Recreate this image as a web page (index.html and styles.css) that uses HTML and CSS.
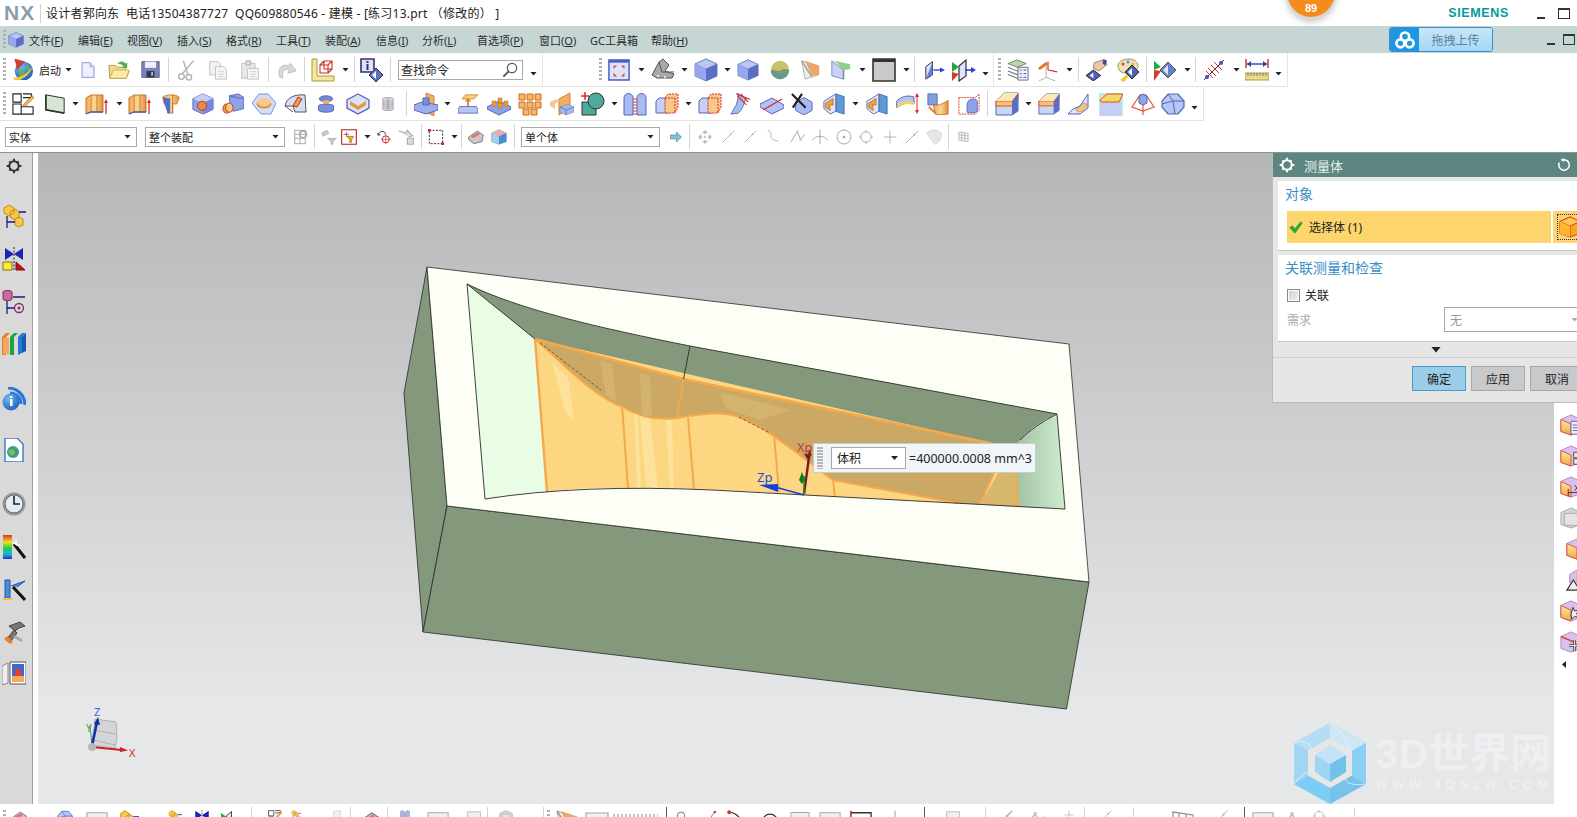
FILE: index.html
```html
<!DOCTYPE html>
<html lang="zh-CN">
<head>
<meta charset="utf-8">
<title>NX 测量体</title>
<link rel="stylesheet" href="styles.css">
</head>
<body>
<svg class="defs" aria-hidden="true">
<defs>
<linearGradient id="gb" x1="0" y1="0" x2="1" y2="1"><stop offset="0" stop-color="#c4d0f8"/><stop offset="1" stop-color="#6f84d8"/></linearGradient>
<linearGradient id="go" x1="0" y1="0" x2="1" y2="0"><stop offset="0" stop-color="#f3a75a"/><stop offset=".5" stop-color="#fbd793"/><stop offset="1" stop-color="#e08f3a"/></linearGradient>
<linearGradient id="gy" x1="0" y1="0" x2="0" y2="1"><stop offset="0" stop-color="#fde9a0"/><stop offset="1" stop-color="#f0a840"/></linearGradient>
<linearGradient id="gr" x1="0" y1="0" x2="0" y2="1"><stop offset="0" stop-color="#e83020"/><stop offset=".3" stop-color="#f0e020"/><stop offset=".55" stop-color="#20d040"/><stop offset=".8" stop-color="#20b0e0"/><stop offset="1" stop-color="#2030d0"/></linearGradient>
<linearGradient id="gw" x1="0" y1="0" x2="1" y2="0"><stop offset="0" stop-color="#9fbea0"/><stop offset="1" stop-color="#cfeccf"/></linearGradient>
<radialGradient id="gs" cx=".35" cy=".3" r=".8"><stop offset="0" stop-color="#6fb8f0"/><stop offset="1" stop-color="#1a5cb8"/></radialGradient>

<symbol id="cube" viewBox="0 0 24 24"><path d="M12 1 23 6v12l-11 5L1 18V6z" fill="#7d92e0" stroke="#5566b4" stroke-width=".8"/><path d="M12 1 23 6 12 11 1 6z" fill="#b9c7f6" stroke="#5566b4" stroke-width=".5"/><path d="M12 11 23 6v12l-11 5z" fill="#5a6fc4"/><path d="M1 6 12 11v12L1 18z" fill="#93a8ee"/></symbol>
<symbol id="cube2" viewBox="0 0 24 24"><path d="M12 1 23 6v12l-11 5L1 18V6z" fill="#8da2ea" stroke="#5566b4"/><path d="M12 1 23 6 12 11 1 6z" fill="#c3cff8"/><path d="M12 11 23 6v12l-11 5z" fill="#7389dc"/></symbol>
<symbol id="start" viewBox="0 0 24 24"><circle cx="13" cy="13" r="10" fill="url(#gs)"/><path d="M7 12c3-2 6 0 6 3s-3 6-5 3zM16 6c3 1 5 5 4 8-3-1-5-4-4-8z" fill="#6cb04a"/><path d="M1 20c6 1 16-3 22-13-2 8-11 17-20 16z" fill="#f3c430"/><path d="M3 0l11 3-8 8z" fill="#e0382c" stroke="#8c2018" stroke-width=".5"/></symbol>
<symbol id="doc" viewBox="0 0 24 24"><path d="M3 1h12l6 6v16H3z" fill="#eef0fc" stroke="#8f93dc" stroke-width="1.5"/><path d="M15 1v6h6" fill="#cfd3f6" stroke="#8f93dc"/></symbol>
<symbol id="folder" viewBox="0 0 24 24"><path d="M2 21 1 7h7l2 2h9v4l4 0-3 8z" fill="#f2d98a" stroke="#b89a3c"/><path d="M2 21l4-9h17l-3 9z" fill="#fbeaa8" stroke="#b89a3c" stroke-width=".7"/><path d="M10 5c3-3 7-3 9 0l2-1v6l-6-1 2-1c-2-2-4-3-7-3z" fill="#4cb050"/></symbol>
<symbol id="save" viewBox="0 0 24 24"><path d="M1 2h22v20H1z" fill="#7a84b8" stroke="#4f577f"/><path d="M5 2h14v8H5z" fill="#eef0f8"/><path d="M7 14h10v8H7z" fill="#30364f"/><path d="M13 15h2v5h-2z" fill="#ccd"/></symbol>
<symbol id="cut" viewBox="0 0 24 24"><g fill="none" stroke="#b5b5b5" stroke-width="1.6"><circle cx="6" cy="19" r="3"/><circle cx="14" cy="20" r="3"/><path d="M7 16 19 2M13 17 8 2"/></g></symbol>
<symbol id="copy" viewBox="0 0 24 24"><path d="M2 2h10l3 3v13H2z" fill="#f2f2f2" stroke="#bbb"/><path d="M9 8h10l3 3v12H9z" fill="#f6f6f6" stroke="#bbb"/><path d="M12 14h7M12 17h7M12 20h7" stroke="#ccc"/></symbol>
<symbol id="paste" viewBox="0 0 24 24"><path d="M2 4h16v18H2z" fill="#e8e8e8" stroke="#bbb"/><path d="M7 1h6v5H7z" fill="#ddd" stroke="#aaa"/><path d="M9 10h13v13H9z" fill="#f6f6f6" stroke="#bbb"/><path d="M12 14h7M12 17h7M12 20h7" stroke="#ccc"/></symbol>
<symbol id="redo" viewBox="0 0 24 24"><path d="M3 20C0 10 6 4 14 7l2-3 7 9-10 3 2-4C9 10 5 13 7 22z" fill="#d8d8d8" stroke="#bbb"/></symbol>
<symbol id="wcs" viewBox="0 0 24 24"><path d="M1 1h5v17h17v5H1z" fill="#f4e6a0" stroke="#b09a30"/><path d="M9 7h8v8H9zM13 3h8v8h-8zM9 7l4-4M17 7l4-4M17 15l4-4" fill="none" stroke="#c8302a" stroke-width="1.1"/></symbol>
<symbol id="info" viewBox="0 0 24 24"><path d="M1 1h13v13H1z" fill="#dfe2fb" stroke="#2f3276" stroke-width="1.6"/><path d="M6.5 3h2v2h-2zM6.5 6h2v6h-2z" fill="#2f3276"/><path d="M16 10l7 7-7 7-7-7z" fill="#5a6fc4" stroke="#333"/><path d="M16 13v8l-4-4z" fill="#fff"/></symbol>
<symbol id="mag" viewBox="0 0 24 24"><circle cx="15" cy="9" r="7" fill="#fff" stroke="#555" stroke-width="1.8"/><path d="M10 14 2 22" stroke="#555" stroke-width="3"/></symbol>
<symbol id="fit" viewBox="0 0 24 24"><path d="M1 1h22v22H1z" fill="#dde4fa" stroke="#4a5ccc" stroke-width="1.6"/><path d="M1 1h22v3H1z" fill="#4a5ccc"/><path d="M6 7h4L6 11zM18 7v4l-4-4zM6 19v-4l4 4zM18 19h-4l4-4z" fill="#e85030"/></symbol>
<symbol id="brk" viewBox="0 0 24 24"><path d="M1 17 8 4l4-3 6 6-4 6 9 3-2 4H6z" fill="#a8a8a8" stroke="#555"/><path d="M8 4l3 10h12" fill="none" stroke="#555"/><circle cx="7" cy="18" r="1" fill="#fff"/><circle cx="14" cy="19" r="1" fill="#fff"/></symbol>
<symbol id="orb" viewBox="0 0 24 24"><circle cx="12" cy="12" r="11" fill="#c8c26a"/><path d="M1 13c5-4 7 2 11 0s6-3 11-1c0 6-5 11-11 11S1 18 1 13z" fill="#5f9c8c"/><path d="M3 15c4-3 7 2 10 0s5-2 9-1" fill="none" stroke="#e08030"/></symbol>
<symbol id="clip" viewBox="0 0 24 24"><path d="M2 1 6 23l16-5V7z" fill="#ececec" stroke="#aaa"/><path d="M6 1l17 6v11l-9 1z" fill="#eaa868"/><path d="M2 1l12 19" stroke="#999" stroke-width="1.5"/></symbol>
<symbol id="clip2" viewBox="0 0 24 24"><path d="M1 1v18l14 4V12z" fill="#c9d4f4" stroke="#7080c0"/><path d="M4 1l11 11 8-1V5z" fill="#8fd08a"/><path d="M14 12v11l2 0V12z" fill="#889"/></symbol>
<symbol id="box" viewBox="0 0 24 24"><path d="M1 1h22v22H1z" fill="#c9c9c9" stroke="#333" stroke-width="1.6"/><path d="M1 1h22v3H1z" fill="#333"/></symbol>
<symbol id="bx2" viewBox="0 0 24 24"><path d="M1 3h22v20H1z" fill="#f0f0f0" stroke="#a8a8a8" stroke-width="1.2"/></symbol>
<symbol id="bx3" viewBox="0 0 24 24"><path d="M1 3h22v20H1z" fill="#fff" stroke="#333" stroke-width="1.4"/><circle cx="1" cy="3" r="2" fill="#d83028"/></symbol>
<symbol id="mv1" viewBox="0 0 24 24"><path d="M1 8l8-6v16l-8 5z" fill="#dfe5fa" stroke="#333" stroke-width="1.2"/><path d="M9 2v16l-8 5" fill="#6a7ed0"/><path d="M10 12h11" stroke="#2e40d8" stroke-width="1.6"/><path d="M18 9l6 3-6 3z" fill="#2e40d8"/></symbol>
<symbol id="mv2" viewBox="0 0 24 24"><path d="M7 8l7-6v16l-7 5z" fill="#dfe5fa" stroke="#333" stroke-width="1.2"/><path d="M0 4l7 5-7 5z" fill="#20a840"/><path d="M0 14l7 2-7 7z" fill="#d83a30"/><path d="M13 12h8" stroke="#2e40d8" stroke-width="1.6"/><path d="M19 9l5 3-5 3z" fill="#2e40d8"/></symbol>
<symbol id="stack" viewBox="0 0 24 24"><path d="M1 5l10-4 10 4-10 4z" fill="#b8d8a8" stroke="#777"/><path d="M1 9l10 4 3-1M1 13l10 4 3-1M1 17l10 4 3-1" fill="none" stroke="#777" stroke-width="1.2"/><path d="M12 9h11v14H12z" fill="#eef" stroke="#667"/><path d="M14 12h2M18 12h3M14 16h2M18 16h3M14 20h2M18 20h3" stroke="#3a4a9a"/></symbol>
<symbol id="axes" viewBox="0 0 24 24"><path d="M10 20 10 8M10 20 2 24M10 20l10 4" stroke="#aaa" fill="none"/><path d="M12 12V3M12 12l10 2" stroke="#e02820" stroke-width="1.3"/><path d="M1 10 10 3l2 3-9 6z" fill="#ef7020"/></symbol>
<symbol id="hand" viewBox="0 0 24 24"><path d="M9 4l10-3 4 5-9 7-6-3z" fill="#eec9a0" stroke="#976"/><path d="M19 0l4 2-2 5-3-2z" fill="#3a4a9a"/><path d="M8 12l8 6-8 6-8-6z" fill="#4d62b8" stroke="#222"/><path d="M8 15v6l-4-3z" fill="#fff"/></symbol>
<symbol id="pal" viewBox="0 0 24 24"><path d="M2 8C2 3 8 1 13 1s9 3 9 7-4 5-7 5-4 2-6 2c-4 0-7-3-7-7z" fill="#f0e0b8" stroke="#a89060"/><circle cx="7" cy="6" r="1.5" fill="#e04030"/><circle cx="12" cy="4" r="1.5" fill="#40a0e0"/><circle cx="17" cy="6" r="1.5" fill="#e8c020"/><path d="M4 22l7-6 1 3-4 5z" fill="#f0c83c"/><path d="M16 7l7 7-7 7-7-7z" fill="#4d62b8" stroke="#222"/><path d="M16 10v8l-4-4z" fill="#fff"/></symbol>
<symbol id="rgbd" viewBox="0 0 24 24"><path d="M1 3l7 6-7 3z" fill="#20a840"/><path d="M1 12l7 1-7 10z" fill="#d83a30"/><path d="M15 4l8 8-8 8-8-8z" fill="#6a7ed0" stroke="#555"/><path d="M15 7v10l-5-5z" fill="#dfe5fa"/></symbol>
<symbol id="ruler" viewBox="0 0 24 24"><path d="M2 22 22 2" stroke="#333"/><path d="M6 10l8 8M9 7l8 8M12 4l8 8M4 13l7 7" stroke="#e03028"/><circle cx="5" cy="19" r="2" fill="#4050d0"/><circle cx="19" cy="5" r="2" fill="#4050d0"/></symbol>
<symbol id="dim" viewBox="0 0 24 24"><path d="M1 1v9M23 1v9" stroke="#c03028" stroke-width="1.4"/><path d="M2 6h20" stroke="#2e40a8" stroke-width="1.4"/><path d="M2 6l4-3v6zM22 6l-4-3v6z" fill="#2e40a8"/><path d="M0 15h24v7H0z" fill="#eed98a" stroke="#a89848"/><path d="M3 15v3M6 15v3M9 15v3M12 15v3M15 15v3M18 15v3M21 15v3" stroke="#777"/></symbol>

<symbol id="sk" viewBox="0 0 24 24"><path d="M1 1h9v9H1zM12 1h9v4h-9M1 12h9v11H1zM10 15h13v8H10" fill="#fff" stroke="#222" stroke-width="1.2"/><path d="M13 12 22 3l2 2-9 9-3 1z" fill="#f0c040" stroke="#a03020" stroke-width=".6"/></symbol>
<symbol id="plane" viewBox="0 0 24 24"><path d="M1 1l22 4v18L1 19z" fill="#d8e4d6" stroke="#333" stroke-width="1.2"/><path d="M1 1v18l22 4" fill="none" stroke="#333" stroke-width="2"/></symbol>
<symbol id="ext" viewBox="0 0 24 24"><path d="M1 6l5-3h12v17H6l-5 2z" fill="url(#go)" stroke="#c07828"/><path d="M6 3v17M12 3v17" stroke="#d08030"/><path d="M1 22l5-2h12" stroke="#4060c0" stroke-width="1.3" fill="none"/><path d="M21 22V9" stroke="#e02820" stroke-width="1.3"/><path d="M19 11l2-4 2 4z" fill="#e02820"/></symbol>
<symbol id="rev" viewBox="0 0 24 24"><path d="M2 4c4-4 16-4 20 0l-3 8h-5v11H8l-1-11H4z" fill="url(#go)" stroke="#c07828"/><path d="M8 5h3v18H8zM2 4l6 1v18L4 12z" fill="#5570c0"/><path d="M14 1v22" stroke="#d03020" stroke-dasharray="2 1"/></symbol>
<symbol id="hole" viewBox="0 0 24 24"><use href="#cube2"/><circle cx="11" cy="14" r="5" fill="#e88a40" stroke="#c03028"/></symbol>
<symbol id="bossi" viewBox="0 0 24 24"><path d="M8 3l10-2 6 4v12l-12 3-3-3z" fill="#8ea2ea" stroke="#5566b4"/><path d="M8 3l12 3 4-1" fill="none" stroke="#5566b4"/><ellipse cx="5" cy="17" rx="4" ry="5" fill="#e8a040" stroke="#c03028"/><ellipse cx="8" cy="16" rx="4" ry="5" fill="#f6c880" stroke="#c03028"/></symbol>
<symbol id="pock" viewBox="0 0 24 24"><path d="M7 2h9l8 9-5 11H9L0 11z" fill="#d5def9" stroke="#7c8fd8"/><ellipse cx="12" cy="12" rx="7" ry="4" fill="#eda958" stroke="#c87d30"/><ellipse cx="12" cy="10" rx="7" ry="4" fill="#f6ca8c"/></symbol>
<symbol id="padi" viewBox="0 0 24 24"><path d="M2 14C3 6 11 2 22 3l1 17H12l-2-6z" fill="#d7ddf5" stroke="#555"/><path d="M10 14 15 5l4 2-5 8z" fill="#e8a040" stroke="#c03028"/><path d="M2 14l8 6" stroke="#555"/></symbol>
<symbol id="cyl" viewBox="0 0 24 24"><ellipse cx="12" cy="5" rx="9" ry="4" fill="#7387d8" stroke="#4456a8"/><path d="M8 7h8v5H8z" fill="#f0b060"/><path d="M2 14c0-2 20-2 20 0v6c0 4-20 4-20 0z" fill="#7a90e0" stroke="#4456a8"/></symbol>
<symbol id="cav" viewBox="0 0 24 24"><path d="M12 2 23 8v8l-11 6L1 16V8z" fill="#dbe2fa" stroke="#5a6fc4" stroke-width="1.4"/><path d="M4 9l8 5 8-5v4l-8 5-8-5z" fill="#ea9540"/><path d="M1 16l11 6 11-6" stroke="#5a6fc4" fill="none"/></symbol>
<symbol id="thr" viewBox="0 0 24 24"><path d="M3 3c0-3 18-3 18 0v18c0 3-18 3-18 0z" fill="#d4d8e0" stroke="#888"/><path d="M3 7h18M3 10h18M3 13h18M3 16h18M3 19h18" stroke="#a0a4b0"/><path d="M12 1v22" stroke="#d05040"/></symbol>
<symbol id="dat" viewBox="0 0 24 24"><path d="M12 1 20 4v20l-8-4z" fill="#f2b060" stroke="#d05040" stroke-width=".7"/><path d="M0 13l8-3 16 3v5l-12 4L0 18z" fill="#9db0ee" stroke="#5566b4"/><path d="M9 6h6v7H9z" fill="#7890dc" stroke="#5566b4"/></symbol>
<symbol id="emb" viewBox="0 0 24 24"><path d="M5 6 9 1h15l-5 5z" fill="#f6d268" stroke="#c08040"/><path d="M12 17V7" stroke="#e07a30" stroke-width="2"/><path d="M8 9l4-4 4 4z" fill="#e07a30"/><path d="M2 15h20l2 4v4H0v-4z" fill="#b4c4f6" stroke="#5566b4"/></symbol>
<symbol id="gr1" viewBox="0 0 24 24"><path d="M0 15 12 9l12 6v2l-12 6L0 17z" fill="#8fa2e6" stroke="#5566b4"/><g fill="#ec9b3c" stroke="#b87020" stroke-width=".5"><path d="M5 9h4v5H5zM11 6h4v5h-4zM17 9h4v5h-4zM11 11h4v5h-4z"/></g></symbol>
<symbol id="gr2" viewBox="0 0 24 24"><g fill="#f3b860" stroke="#d06820" stroke-width="1"><path d="M1 2h6v6H1zM9 2h6v6H9zM17 2h6v6h-6zM1 10h6v6H1zM9 10h6v6H9zM17 10h6v6h-6zM5 17h6v6H5zM13 17h6v6h-6z"/></g></symbol>
<symbol id="mir" viewBox="0 0 24 24"><path d="M9 7l11-6v15L9 23z" fill="#f2b060" stroke="#d08030"/><path d="M0 10l6-3 4 2-5 3zM0 10v4l5 3v-5z" fill="#f6c890"/><path d="M10 15l8-3 6 3-8 3zM10 15v5l6 3v-5zM16 18l8-3v5l-8 3z" fill="#a4b8f2" stroke="#5566b4" stroke-width=".4"/></symbol>
<symbol id="shp" viewBox="0 0 24 24"><path d="M4 0v8M0 4h8" stroke="#e02820" stroke-width="1.5"/><path d="M1 10h14v13H1z" fill="#4dab9c" stroke="#333"/><circle cx="15" cy="9" r="8" fill="#4dab9c" stroke="#333"/></symbol>
<symbol id="arch" viewBox="0 0 24 24"><path d="M1 23V6c0-6 9-6 9 0v17zM14 23V6c0-6 9-6 9 0v17z" fill="#a9bcf2" stroke="#5566b4"/><path d="M11 6v17M13 6v17" stroke="#e83a30" stroke-dasharray="2 1"/></symbol>
<symbol id="trm" viewBox="0 0 24 24"><path d="M1 9l3-3h10v15H1z" fill="#c4d0f8" stroke="#5566b4"/><path d="M10 6l3-4h10v13l-3 6H10z" fill="#f6c88a" stroke="#e02820" stroke-dasharray="2 1"/><path d="M20 6v15M10 6h10" stroke="#e02820" stroke-dasharray="2 1"/></symbol>
<symbol id="cutp" viewBox="0 0 24 24"><path d="M8 1h3l-3 12L2 23l8-1c6-5 6-12 9-16z" fill="#a9bcf2" stroke="#5566b4"/><path d="M9 1l14 6M9 3l10 10M13 1l8 9" stroke="#e02820" stroke-width="1.2"/></symbol>
<symbol id="slc" viewBox="0 0 24 24"><path d="M0 12 12 6l12 7v3l-12 6L0 15z" fill="#b2c2f4" stroke="#5566b4"/><path d="M3 18 22 7" stroke="#e02820" stroke-width="1.4"/></symbol>
<symbol id="xcb" viewBox="0 0 24 24"><path d="M14 5l9 5v9l-9 5-9-5v-9z" fill="#a7bbf2" stroke="#5566b4"/><path d="M1 1l15 15M12 1 2 16" stroke="#222" stroke-width="2.4"/></symbol>
<symbol id="shl" viewBox="0 0 24 24"><path d="M14 1l9 3v19l-9-3z" fill="#5f9ad8" stroke="#3a6eb0"/><path d="M1 9l13-8v19L8 23 1 17z" fill="#dfe6fb" stroke="#5566b4"/><path d="M3 11l8-5v7H7l1 6-5-3z" fill="#eea24a" stroke="#c07828"/></symbol>
<symbol id="ofs" viewBox="0 0 24 24"><path d="M0 10C5 4 12 3 18 5v7C12 10 6 11 1 16z" fill="#b4c6ee" stroke="#5566b4"/><path d="M1 13c5-4 11-5 17-3v3c-6-2-12-1-17 3z" fill="#f0d25c"/><path d="M21 2v18" stroke="#e02820"/><path d="M19 5l2-4 2 4zM19 18l2 4 2-4z" fill="#e02820"/></symbol>
<symbol id="swp" viewBox="0 0 24 24"><path d="M1 1h10v12H1z" fill="#7fa0e0" stroke="#5566b4"/><path d="M7 13c6 1 10-1 16-5v15c-6 1-10 1-14 0z" fill="url(#go)" stroke="#c87030"/><path d="M2 15l7 7" stroke="#e07a30" stroke-width="2"/></symbol>
<symbol id="dbx" viewBox="0 0 24 24"><path d="M1 5h18l4-4v18l-4 4H1z" fill="none" stroke="#e02820" stroke-dasharray="2 1"/><path d="M12 8c4-2 8-2 9 1v11c-2 2-8 2-11 1 0-5-1-10 2-13z" fill="#8ea4ea" stroke="#5566b4"/></symbol>
<symbol id="bln" viewBox="0 0 24 24"><path d="M1 9 9 1h14v18l-6 4H1z" fill="#c8d6f4" stroke="#5566b4"/><path d="M1 9h16l6-8v7l-6 6H1z" fill="#f3c470" stroke="#e05030"/><path d="M17 9v14l6-4V1z" fill="#5a6fc4"/><path d="M1 9 9 1h14l-6 8z" fill="#ffe7b0"/></symbol>
<symbol id="fld" viewBox="0 0 24 24"><path d="M12 14 20 2v14l-8 6H0l5-5z" fill="#dbe2fa" stroke="#5566b4"/><path d="M8 17c3 0 6-3 7-6l4 1c-1 5-6 8-9 8z" fill="#f6cc72" stroke="#e05030" stroke-width=".5"/></symbol>
<symbol id="drf" viewBox="0 0 24 24"><path d="M0 1h24v23H0z" fill="#bde9ea"/><path d="M1 8h21v16H1z" fill="#c3cff4"/><path d="M1 8 8 2h16l-4 8H2z" fill="#f6d868" stroke="#e05030"/></symbol>
<symbol id="lft" viewBox="0 0 24 24"><path d="M1 15 9 3h6l8 12-11 4z" fill="none" stroke="#e85038" stroke-width="1.2"/><path d="M8 4l4-2 4 2v7l-4 2-4-2z" fill="#8ea4ea" stroke="#5566b4"/><path d="M12 13v10" stroke="#e85038" stroke-width="1.2"/></symbol>
<symbol id="rnd" viewBox="0 0 24 24"><path d="M7 2h10l6 7v6l-6 7H7l-6-7V9z" fill="#b7c6f4" stroke="#5566b4" stroke-width="1.2"/><path d="M7 2l5 7 11 0M12 9 1 12M12 9l2 13" fill="none" stroke="#5566b4"/></symbol>

<symbol id="gi1" viewBox="0 0 24 24"><path d="M4 2h16v20H4zM4 8h16M4 14h16M12 2v20" fill="none" stroke="#bbb" stroke-width="2"/><circle cx="17" cy="8" r="5" fill="none" stroke="#aaa" stroke-width="2"/></symbol>
<symbol id="gi2" viewBox="0 0 24 24"><path d="M1 6l8-4 3 4-9 5zM10 14h13l-5 5v4h-3v-4z" fill="#c8c8c8" stroke="#aaa"/></symbol>
<symbol id="rfl" viewBox="0 0 24 24"><path d="M1 1h22v22H1z" fill="#fff" stroke="#b02020" stroke-width="1.6"/><path d="M8 4v8M4 8h8" stroke="#a02020"/><path d="M9 11h10l-3 5v4h-3v-4z" fill="#f0b030" stroke="#a06a10"/></symbol>
<symbol id="tgt" viewBox="0 0 24 24"><circle cx="15" cy="16" r="6" fill="none" stroke="#c02020" stroke-width="1.6"/><path d="M15 8v16M7 16h17" stroke="#c02020"/><path d="M2 8C4 1 12 1 15 6l-2 1M1 5l1 4 4-1" fill="none" stroke="#333" stroke-width="1.6"/></symbol>
<symbol id="gi3" viewBox="0 0 24 24"><path d="M1 3l10 3 3-4 8 8-6 2M14 14h9v9h-9z" fill="#ddd" stroke="#aaa" stroke-width="1.6"/></symbol>
<symbol id="dsh" viewBox="0 0 24 24"><path d="M2 2h20v20H2z" fill="none" stroke="#333" stroke-width="1.5" stroke-dasharray="3 2"/><path d="M0 0h4v4H0zM20 20h4v4h-4z" fill="#d02020"/></symbol>
<symbol id="vw1" viewBox="0 0 24 24"><path d="M1 12 14 3l9 6-2 10-12 3-8-6z" fill="#c8c8cc" stroke="#555"/><path d="M4 11l11-6 3 3-11 6z" fill="#e07070"/></symbol>
<symbol id="vw2" viewBox="0 0 24 24"><path d="M12 1 23 6v13l-11 4L1 19V6z" fill="#9fd0f0" stroke="#7aa"/><path d="M1 6l11 5 11-5-11-5z" fill="#f0a8a8"/><path d="M12 11v12l11-4V6z" fill="#4a8cd8"/></symbol>
<symbol id="goa" viewBox="0 0 24 24"><path d="M1 8h12V2l10 10-10 10v-6H1z" fill="#78c8d8" stroke="#557"/></symbol>
<symbol id="g1" viewBox="0 0 24 24"><path d="M12 2 22 12 12 22 2 12z" fill="none" stroke="#ccc"/><circle cx="12" cy="5" r="2.5" fill="#bbb"/><circle cx="5" cy="12" r="2.5" fill="#bbb"/><circle cx="19" cy="12" r="2.5" fill="#bbb"/><circle cx="12" cy="19" r="2.5" fill="#bbb"/><circle cx="12" cy="12" r="2" fill="#ccc"/></symbol>
<symbol id="g2" viewBox="0 0 24 24"><path d="M1 23 23 1" stroke="#aaa" stroke-width="1.5"/><circle cx="16" cy="8" r="2" fill="#bbb"/></symbol>
<symbol id="g3" viewBox="0 0 24 24"><path d="M3 1c10 0 2 11 8 15 3 2 6 2 10 3" fill="none" stroke="#aaa" stroke-width="1.5"/></symbol>
<symbol id="g4" viewBox="0 0 24 24"><path d="M1 20 11 4l5 12 6-8" fill="none" stroke="#aaa" stroke-width="1.5"/><circle cx="11" cy="4" r="2" fill="#ccc"/><circle cx="16" cy="16" r="2" fill="#ccc"/></symbol>
<symbol id="g5" viewBox="0 0 24 24"><path d="M1 17C4 9 20 9 23 17M12 1v22" fill="none" stroke="#aaa" stroke-width="1.5"/></symbol>
<symbol id="g6" viewBox="0 0 24 24"><circle cx="12" cy="12" r="10.5" fill="none" stroke="#aaa" stroke-width="1.5"/><circle cx="12" cy="12" r="2" fill="#aaa"/></symbol>
<symbol id="g7" viewBox="0 0 24 24"><circle cx="12" cy="12" r="9" fill="none" stroke="#aaa" stroke-width="1.5"/><path d="M12 0v5M12 19v5M0 12h5M19 12h5" stroke="#bbb" stroke-width="2"/></symbol>
<symbol id="g8" viewBox="0 0 24 24"><path d="M12 1v22M1 12h22" stroke="#aaa" stroke-width="1.5"/></symbol>
<symbol id="g9" viewBox="0 0 24 24"><path d="M1 6c6-6 16-6 22 0 0 8-2 14-10 17-2-4-8-10-12-17z" fill="#e6e6e6" stroke="#ccc"/></symbol>
<symbol id="g10" viewBox="0 0 24 24"><path d="M2 2l20 3v18L2 20zM2 8l20 3M2 14l20 3M8 3v18M15 4v18" fill="none" stroke="#999" stroke-width="1.4"/></symbol>
<symbol id="k1" viewBox="0 0 24 24"><circle cx="12" cy="14" r="9" fill="none" stroke="#333" stroke-width="1.6"/></symbol>
<symbol id="k2" viewBox="0 0 24 24"><path d="M2 24C6 14 10 8 14 6" fill="none" stroke="#333" stroke-width="1.5"/><circle cx="14" cy="5" r="3" fill="#d83028"/></symbol>
<symbol id="k3" viewBox="0 0 24 24"><path d="M3 3C10 3 18 8 20 20" fill="none" stroke="#333" stroke-width="1.5"/><circle cx="3" cy="3" r="2.6" fill="#d83028"/><circle cx="20" cy="15" r="2.6" fill="#d83028"/></symbol>

<symbol id="gear" viewBox="0 0 24 24"><circle cx="12" cy="12" r="7" fill="none" stroke="currentColor" stroke-width="3"/><path d="M10.5 1h3v4h-3zM10.5 19h3v4h-3zM1 10.5h4v3H1zM19 10.5h4v3h-4zM4 6l2-2 3 3-2 2zM15 7l3-3 2 2-3 3zM4 18l3-3 2 2-3 3zM15 17l2-2 3 3-2 2z" fill="currentColor"/></symbol>
<symbol id="l1" viewBox="0 0 24 24"><path d="M2 4l5-3 5 3v5l-5 3-5-3zM8 8l5-3 4 3v5l-4 3-5-3z" fill="#f8c848" stroke="#c88818"/><path d="M13 15l4-2 4 2v6l-4 2-4-2z" fill="#f8c848" stroke="#c88818"/><path d="M5 12v12M5 18h8M17 8h7" stroke="#1a1a80" stroke-width="1.3"/></symbol>
<symbol id="l2" viewBox="0 0 24 24"><path d="M3 1l9 6 9-6v12l-9-6-9 6z" fill="#1f22b0"/><path d="M12 0v24" stroke="#222" stroke-dasharray="2 1.5"/><path d="M1 15h9v8H1z" fill="#f6f030" stroke="#8a6a10"/><path d="M14 15l9 8h-9z" fill="#c81010" stroke="#801010"/></symbol>
<symbol id="l3" viewBox="0 0 24 24"><path d="M1 2c0-2 9-2 9 0v7c0 2-9 2-9 0z" fill="#c86a9a" stroke="#802858"/><path d="M5 11v13M5 18h7M11 7h12" stroke="#1a1a80" stroke-width="1.3"/><circle cx="17" cy="18" r="4.5" fill="none" stroke="#8a2868" stroke-width="1.3"/><circle cx="17" cy="18" r="1.5" fill="#8a2868"/></symbol>
<symbol id="l4" viewBox="0 0 24 24"><path d="M0 6 4 2h4L4 6v18H0z" fill="#f07820"/><path d="M1 7h6v16H1z" fill="#f0a860"/><path d="M8 6l4-4h4l-4 4v18H8z" fill="#20a040"/><path d="M16 6l4-4h4l-4 4v16l-4 2z" fill="#2878d8"/><path d="M20 6l4-4v18l-4 2z" fill="#1858b0"/></symbol>
<symbol id="l5" viewBox="0 0 24 24"><path d="M6 1c9 0 17 7 17 17M8 6c6 0 11 5 11 11" fill="none" stroke="#2878d8" stroke-width="3.2"/><circle cx="9" cy="15" r="8.5" fill="url(#gs)"/><path d="M8 9h2.5v2H8zM8 12h2.5v7H8z" fill="#fff"/></symbol>
<symbol id="l6" viewBox="0 0 24 24"><path d="M3 0h12l6 6v18H3z" fill="#fff" stroke="#3878c8" stroke-width="1.4"/><circle cx="11" cy="14" r="6" fill="#3a9a8c"/><path d="M6 13c3-3 7-2 7 1s-3 4-5 3" fill="#7abf50"/></symbol>
<symbol id="l7" viewBox="0 0 24 24"><circle cx="12" cy="12" r="11.5" fill="#999"/><circle cx="12" cy="12" r="9" fill="#e4ecf4" stroke="#666"/><path d="M12 4v8h6" fill="none" stroke="#222" stroke-width="1.6"/></symbol>
<symbol id="l8" viewBox="0 0 24 24"><path d="M1 0h9v24H1z" fill="url(#gr)"/><path d="M12 9 23 23" stroke="#111" stroke-width="3"/><path d="M8 6l5 2 1-5 1 6 5 1-5 1z" fill="#fff"/></symbol>
<symbol id="l9" viewBox="0 0 24 24"><path d="M3 3h5v18H3zM9 9l14-5-8 6" fill="#4a8cd8" stroke="#1858b0"/><path d="M11 10l12 13" stroke="#111" stroke-width="3"/><path d="M1 22h9" stroke="#f0c040" stroke-width="2"/></symbol>
<symbol id="l10" viewBox="0 0 24 24"><path d="M7 6l11-4 5 4-6 2-4 3zM4 20l8-10 3 3-6 8z" fill="#777" stroke="#444"/><path d="M2 19l3-3 6 6-3 2z" fill="#f08020"/><path d="M13 15l8 5-2 2-8-5z" fill="#aaa"/></symbol>
<symbol id="l11" viewBox="0 0 24 24"><path d="M0 5l6-3v20l-6 2z" fill="#eee" stroke="#888"/><path d="M8 1h16v22H8z" fill="#fff" stroke="#555"/><path d="M10 3h12v12H10z" fill="#3868d8"/><path d="M13 8h6v7h-6z" fill="#e84028"/><path d="M10 15h12v6H10z" fill="#f8a858"/></symbol>

<symbol id="pc" viewBox="0 0 24 24"><path d="M12 1 23 6v13l-11 4L1 19V6z" fill="#d9c0ee" stroke="#a884c8"/><path d="M1 6l11 5v12L1 19z" fill="url(#gy)" stroke="#e04838"/></symbol>
<symbol id="p1" viewBox="0 0 24 24"><use href="#pc"/><path d="M12 8h10v14H12z" fill="#eef" stroke="#5566b4"/><path d="M14 12h6M14 15h6M14 18h6" stroke="#5566b4"/></symbol>
<symbol id="p2" viewBox="0 0 24 24"><use href="#pc"/><path d="M15 8h7v6h-7zM15 15h7v6h-7z" fill="#eee" stroke="#444"/></symbol>
<symbol id="p3" viewBox="0 0 24 24"><use href="#pc"/><path d="M9 14v8M9 18h14M16 10l5 6M21 10l-5 6" stroke="#333" fill="none"/></symbol>
<symbol id="p4" viewBox="0 0 24 24"><path d="M12 1 23 6v13l-11 4L1 19V6z" fill="#d4d4d4" stroke="#aaa"/><path d="M5 7h12l3 3v10H5z" fill="#e4e4e4" stroke="#aaa"/></symbol>
<symbol id="p6" viewBox="0 0 24 24"><path d="M12 1 23 6v8l-11 5L4 15V6z" fill="#d9c0ee" stroke="#a884c8"/><path d="M12 4v10" stroke="#e07a30" stroke-dasharray="2 1"/><path d="M1 23 8 12l7 11z" fill="#eee" stroke="#333" stroke-width="1.3"/></symbol>
<symbol id="p7" viewBox="0 0 24 24"><use href="#pc"/><path d="M14 8l2 4 4-1-2 4 3 4-5-1-3 3-1-5z" fill="#eee" stroke="#333"/></symbol>
<symbol id="p8" viewBox="0 0 24 24"><path d="M12 1 23 6v13l-11 4L1 19V6z" fill="#d9c0ee" stroke="#a884c8"/><path d="M1 6l14 6" stroke="#e04838" stroke-width="2"/><path d="M16 10v12M10 16h12" stroke="#333" stroke-width="3"/><path d="M16 10v12M10 16h12" stroke="#eee" stroke-width="1.2"/></symbol>
<symbol id="ocube" viewBox="0 0 24 24"><path d="M12 1 23 6v13l-11 4L1 19V6z" fill="#f6a820" stroke="#e83018"/><path d="M1 6l11 5 11-5-11-5z" fill="#fcc850" stroke="#e83018"/><path d="M12 11v12" stroke="#e83018"/><path d="M1 6l11 5v12L1 19z" fill="#fcb830"/></symbol>
<symbol id="cloud" viewBox="0 0 24 24"><g fill="none" stroke="#fff" stroke-width="3.2"><circle cx="12" cy="8" r="5"/><circle cx="6.5" cy="16" r="4.8"/><circle cx="17.5" cy="16" r="4.8"/></g></symbol>
<symbol id="chk" viewBox="0 0 24 24"><path d="M1 13l5-3 4 5L20 3l3 2-12 17h-2z" fill="#20b030" stroke="#0e8020" stroke-width=".6"/></symbol>
<symbol id="rst" viewBox="0 0 24 24"><path d="M12 3a9 9 0 1 1-8 5" fill="none" stroke="#fff" stroke-width="2.6"/><path d="M12 0v7L6 3z" fill="#fff"/></symbol>
</defs>
</svg>

<header class="titlebar">
  <span class="nx">NX</span>
  <span class="title-sep"></span>
  <span class="title-text">设计者郭向东  电话13504387727  QQ609880546 - 建模 - [练习13.prt （修改的） ]</span>
  <span class="siemens">SIEMENS</span>
  <span class="win-min"></span>
  <span class="win-restore"></span>
  <span class="badge">89</span>
</header>

<nav class="menubar">
  <span class="grip grip-menu"></span>
  <svg class="i w16 menu-logo"><use href="#cube"/></svg>
  <span class="mi mw49">文件(<u>F</u>)</span>
  <span class="mi mw49">编辑(<u>E</u>)</span>
  <span class="mi mw50">视图(<u>V</u>)</span>
  <span class="mi mw49">插入(<u>S</u>)</span>
  <span class="mi mw50">格式(<u>R</u>)</span>
  <span class="mi mw49">工具(<u>T</u>)</span>
  <span class="mi mw51">装配(<u>A</u>)</span>
  <span class="mi mw46">信息(<u>I</u>)</span>
  <span class="mi mw55">分析(<u>L</u>)</span>
  <span class="mi mw62">首选项(<u>P</u>)</span>
  <span class="mi mw51">窗口(<u>O</u>)</span>
  <span class="mi mw61">GC工具箱</span>
  <span class="mi">帮助(<u>H</u>)</span>
  <div class="upload"><span class="upload-ico"><svg class="i w20"><use href="#cloud"/></svg></span><span class="upload-txt">拖拽上传</span></div>
  <span class="win-min doc-min"></span>
  <span class="win-restore doc-restore"></span>
</nav>

<div class="tb">
  <span class="grip"></span>
  <svg class="i w22 m6"><use href="#start"/></svg>
  <span class="lbl m5">启动</span>
  <span class="a m4"></span>
  <svg class="i w16 m8"><use href="#doc"/></svg>
  <svg class="i w22 m12"><use href="#folder"/></svg>
  <svg class="i w19 m11"><use href="#save"/></svg>
  <span class="sep m8"></span>
  <svg class="i w22 m7"><use href="#cut"/></svg>
  <svg class="i w20 m10"><use href="#copy"/></svg>
  <svg class="i w20 m12"><use href="#paste"/></svg>
  <span class="sep m8"></span>
  <svg class="i w20 m8"><use href="#redo"/></svg>
  <span class="sep m7"></span>
  <svg class="i w24 m6"><use href="#wcs"/></svg>
  <span class="a m7"></span>
  <span class="sep m5"></span>
  <svg class="i w24 m5"><use href="#info"/></svg>
  <span class="sep m6"></span>
  <div class="search m7"><span>查找命令</span><svg class="i w16"><use href="#mag"/></svg></div>
  <span class="a a-low m7"></span>
  <span class="sep sep-full m5"></span>
  <span class="grip m56"></span>
  <svg class="i w22 m6"><use href="#fit"/></svg>
  <span class="a m8"></span>
  <svg class="i w24 m6"><use href="#brk"/></svg>
  <span class="a m6"></span>
  <svg class="i w24 m6"><use href="#cube"/></svg>
  <span class="a m6"></span>
  <svg class="i w22 m6"><use href="#cube"/></svg>
  <svg class="i w20 m11"><use href="#orb"/></svg>
  <svg class="i w20 m10"><use href="#clip"/></svg>
  <svg class="i w20 m11"><use href="#clip2"/></svg>
  <span class="a m8"></span>
  <svg class="i w24 m6"><use href="#box"/></svg>
  <span class="a m7"></span>
  <span class="sep m4"></span>
  <svg class="i w20 m10"><use href="#mv1"/></svg>
  <svg class="i w24 m7"><use href="#mv2"/></svg>
  <span class="a a-low m6"></span>
  <span class="sep sep-full m4"></span>
  <span class="grip m4"></span>
  <svg class="i w22 m6"><use href="#stack"/></svg>
  <svg class="i w22 m8"><use href="#axes"/></svg>
  <span class="a m7"></span>
  <span class="sep m5"></span>
  <svg class="i w22 m7"><use href="#hand"/></svg>
  <svg class="i w24 m8"><use href="#pal"/></svg>
  <span class="sep m6"></span>
  <svg class="i w24 m6"><use href="#rgbd"/></svg>
  <span class="a m7"></span>
  <span class="sep m4"></span>
  <svg class="i w24 m6"><use href="#ruler"/></svg>
  <span class="a m7"></span>
  <svg class="i w24 m5"><use href="#dim"/></svg>
  <span class="a a-low m6"></span>
  <span class="sep sep-full m5"></span>
</div>

<div class="tb">
  <span class="grip"></span>
  <svg class="i w22 m6"><use href="#sk"/></svg>
  <svg class="i w20 m11"><use href="#plane"/></svg>
  <span class="a m7"></span>
  <svg class="i w24 m6"><use href="#ext"/></svg>
  <span class="a m7"></span>
  <svg class="i w24 m5"><use href="#ext"/></svg>
  <svg class="i w20 m9"><use href="#rev"/></svg>
  <svg class="i w22 m11"><use href="#hole"/></svg>
  <svg class="i w22 m8"><use href="#bossi"/></svg>
  <svg class="i w24 m8"><use href="#pock"/></svg>
  <svg class="i w24 m7"><use href="#padi"/></svg>
  <svg class="i w18 m10"><use href="#cyl"/></svg>
  <svg class="i w24 m11"><use href="#cav"/></svg>
  <svg class="i w14 m11"><use href="#thr"/></svg>
  <span class="sep m11"></span>
  <svg class="i w24 m7"><use href="#dat"/></svg>
  <span class="a m6"></span>
  <svg class="i w20 m7"><use href="#emb"/></svg>
  <svg class="i w24 m9"><use href="#gr1"/></svg>
  <svg class="i w24 m7"><use href="#gr2"/></svg>
  <svg class="i w24 m8"><use href="#mir"/></svg>
  <svg class="i w24 m7"><use href="#shp"/></svg>
  <span class="a m6"></span>
  <svg class="i w24 m5"><use href="#arch"/></svg>
  <svg class="i w24 m8"><use href="#trm"/></svg>
  <span class="a m6"></span>
  <svg class="i w24 m6"><use href="#trm"/></svg>
  <svg class="i w22 m7"><use href="#cutp"/></svg>
  <svg class="i w24 m9"><use href="#slc"/></svg>
  <svg class="i w22 m7"><use href="#xcb"/></svg>
  <svg class="i w22 m10"><use href="#shl"/></svg>
  <span class="a m7"></span>
  <svg class="i w22 m7"><use href="#shl"/></svg>
  <svg class="i w24 m8"><use href="#ofs"/></svg>
  <svg class="i w22 m7"><use href="#swp"/></svg>
  <svg class="i w22 m9"><use href="#dbx"/></svg>
  <span class="sep m7"></span>
  <svg class="i w24 m7"><use href="#bln"/></svg>
  <span class="a m6"></span>
  <svg class="i w22 m6"><use href="#bln"/></svg>
  <svg class="i w24 m8"><use href="#fld"/></svg>
  <svg class="i w24 m7"><use href="#drf"/></svg>
  <svg class="i w24 m8"><use href="#lft"/></svg>
  <svg class="i w24 m6"><use href="#rnd"/></svg>
  <span class="a a-low m6"></span>
  <span class="sep sep-full m5"></span>
</div>

<div class="tb tb-sel">
  <div class="sel sel-a"><span>实体</span><span class="a"></span></div>
  <div class="sel sel-b m8"><span>整个装配</span><span class="a"></span></div>
  <svg class="i w16 m7"><use href="#gi1"/></svg>
  <span class="sep m6"></span>
  <svg class="i w16 m6"><use href="#gi2"/></svg>
  <svg class="i w16 m4"><use href="#rfl"/></svg>
  <span class="a m7"></span>
  <svg class="i w14 m6"><use href="#tgt"/></svg>
  <svg class="i w16 m7"><use href="#gi3"/></svg>
  <span class="sep m7"></span>
  <svg class="i w16 m6"><use href="#dsh"/></svg>
  <span class="a m7"></span>
  <span class="sep m3"></span>
  <svg class="i w16 m6"><use href="#vw1"/></svg>
  <svg class="i w16 m7"><use href="#vw2"/></svg>
  <span class="sep m7"></span>
  <div class="sel sel-c m6"><span>单个体</span><span class="a"></span></div>
  <svg class="i w12 m10"><use href="#goa"/></svg>
  <span class="sep m7"></span>
  <svg class="i w16 m7"><use href="#g1"/></svg>
  <svg class="i w13 m9"><use href="#g2"/></svg>
  <svg class="i w13 m9"><use href="#g2"/></svg>
  <svg class="i w14 m9"><use href="#g3"/></svg>
  <svg class="i w16 m10"><use href="#g4"/></svg>
  <svg class="i w16 m6"><use href="#g5"/></svg>
  <svg class="i w16 m8"><use href="#g6"/></svg>
  <svg class="i w14 m7"><use href="#g7"/></svg>
  <svg class="i w14 m10"><use href="#g8"/></svg>
  <svg class="i w14 m8"><use href="#g2"/></svg>
  <svg class="i w16 m7"><use href="#g9"/></svg>
  <span class="sep m6"></span>
  <svg class="i w11 m9"><use href="#g10"/></svg>
</div>

<main class="workspace">
  <aside class="leftbar">
    <svg class="i w16 gear-ico"><use href="#gear"/></svg>
    <svg class="i w24 t30"><use href="#l1"/></svg>
    <svg class="i w24 t19"><use href="#l2"/></svg>
    <svg class="i w24 t19"><use href="#l3"/></svg>
    <svg class="i w24 t17"><use href="#l4"/></svg>
    <svg class="i w24 t32"><use href="#l5"/></svg>
    <svg class="i w24 t27"><use href="#l6"/></svg>
    <svg class="i w24 t30"><use href="#l7"/></svg>
    <svg class="i w24 t19"><use href="#l8"/></svg>
    <svg class="i w24 t18"><use href="#l9"/></svg>
    <svg class="i w24 t19"><use href="#l10"/></svg>
    <svg class="i w24 t17"><use href="#l11"/></svg>
  </aside>
  <div class="viewport">
    <svg class="model" viewBox="38 153 1516 651">
      <path d="M427 267 404 393 423 632 447 506z" fill="#84987b" stroke="#2a2a2a" stroke-width=".8"/>
      <path d="M447 506 1089 582 1066.5 709 423 632z" fill="#84987b" stroke="#2a2a2a" stroke-width=".8"/>
      <path d="M427 267 1069 344 1089 582 447 506z" fill="#fdfff6" stroke="#2a2a2a" stroke-width=".8"/>
      <path d="M467 284 535 339 547 492Q510 494 485 499z" fill="#e8fde4"/>
      <path d="M467 284C520 310 600 328 690 346L1057 414Q1030 425 1012 450L989 443 683.5 379 535 339z" fill="#84987b"/>
      <path d="M535 339 989 443 1012 450 1018 507 980 504.5 804 495Q712 488 623 488 570 488 547 492z" fill="#fcd681"/>
      <path d="M535 339C565 365 595 398 623 407 640 418 660 420 677 418 695 415 720 410 739 417 760 425 780 440 797 453 810 463 822 472 833 480L958 503 980 504.5 994 473 989 443 683.5 379z" fill="#cba864"/>
      <path d="M1012 450Q1000 470 980 504.5L1018 507 1016 473z" fill="#d8b86c"/>
      <path d="M1057 414Q1030 425 1012 450L1016 473 1018 507 1065 509z" fill="url(#gw)"/>
      <g fill="#fde9b0" opacity=".6">
        <path d="M552 362 568 378 574 420 565 412zM640 416 650 418 658 489 646 488zM634 413 638 415 641 488 637 488zM666 420 672 420 674 489 670 489z"/>
      </g>
      <g fill="#dcbc78" opacity=".55">
        <path d="M600 360 612 364 616 402 606 396zM640 374 650 376 652 416 642 416zM720 392 790 410 760 420 725 408z"/>
      </g>
      <g fill="none" stroke="#f5a84c" stroke-width="2">
        <path d="M535 339 683.5 379 989 443 1012 450" stroke-width="2.6"/>
        <path d="M535 339 547 492" stroke-width="2.4"/>
        <path d="M535 339C565 365 595 398 623 407 640 418 660 420 677 418 695 415 720 410 739 417 760 425 780 440 797 453 810 463 822 472 833 480L958 503"/>
        <path d="M683.5 379 677 418M622 405 628 488M688 418 694 489M774 435 779 492M833 480 835 497M994 473 980 504M1016 473 1018 507"/>
      </g>
      <g fill="none" stroke="#2a2a2a" stroke-width=".9">
        <path d="M467 284 485 499Q580 484 712 490L1065 509 1057 414"/>
        <path d="M467 284C520 310 600 328 690 346L1057 414M690 346 683.5 379M467 284 535 339M1057 414Q1035 425 1020 440"/>
        <path d="M540 343 601 390M739 417 770 433" stroke-dasharray="3 2" stroke-width=".6"/>
      </g>
      <path d="M804 494 810 450" stroke="#7c1c24" stroke-width="2.4"/>
      <path d="M808 460l-4-6 8 0z" fill="#7c1c24"/>
      <path d="M804 494V476" stroke="#1c8c20" stroke-width="1.4"/>
      <path d="M802 472l-3 8 3 4 3-4z" fill="#0c7c20"/>
      <path d="M804 495 775 487" stroke="#1040e0" stroke-width="1.4"/>
      <path d="M778 484 759 485 778 492z" fill="#1040e0"/>
      <text class="tri tri-x" x="797" y="452">Xp</text>
      <text class="tri tri-z" x="757" y="482">Zp</text>

      <path d="M95 719 116 722 117 737 115 748 92 745z" fill="#d4d5d7" stroke="#b0b1b3"/>
      <path d="M94 730 116 734M93 740 115 745" stroke="#b0b1b3"/>
      <path d="M92 746 90 725" stroke="#40a040"/>
      <path d="M92 746 97 722" stroke="#1030b0" stroke-width="2.6"/>
      <path d="M94 724l4-7 2 8z" fill="#1030b0"/>
      <path d="M92 747 122 750" stroke="#d02020" stroke-width="2"/>
      <path d="M120 747l8 3.5-8 1.5z" fill="#d02020"/>
      <circle cx="92" cy="747" r="4" fill="#b8b8ba"/>
      <text class="wcs-z" x="94" y="716">Z</text>
      <text class="wcs-y" x="86" y="732">Y</text>
      <text class="wcs-x" x="129" y="757">X</text>

      <path d="M1330 722.7 1366 743V784L1330 804 1294 784V743z" fill="#a0d6f2"/>
      <path d="M1330 722.7 1366 743 1330 763z" fill="#cde7f5"/>
      <path d="M1366 743V784L1330 763z" fill="#8ad0f2"/>
      <path d="M1366 784 1330 804 1330 763z" fill="#76c2ea"/>
      <path d="M1330 804 1294 784 1330 763z" fill="#7ccdf5"/>
      <path d="M1294 743 1330 722.7 1330 763z" fill="#b5def5"/>
      <path d="M1330 722.7C1345 735 1350 745 1349 752M1366 784C1350 786 1340 782 1349 774M1294 784C1305 770 1312 770 1311 774M1294 743C1305 738 1312 745 1311 752" fill="none" stroke="#e5f3fb" stroke-width=".8"/>
      <path d="M1330 738 1352 750.5V775.5L1330 788 1308 775.5V750.5z" fill="#e5e6e8"/>
      <path d="M1330 745 1346 755 1330 764 1315 755z" fill="#c3e2f5"/>
      <path d="M1315 755 1330 764V782L1315 772z" fill="#9ed5f3"/>
      <path d="M1346 755V772L1330 782V764z" fill="#73c1e8"/>
    </svg>
    <div class="tip">
      <span class="grip grip-tip"></span>
      <div class="sel sel-tip"><span>体积</span><span class="a"></span></div>
      <span class="tip-val">=400000.0008 mm^3</span>
    </div>
    <div class="wm">3D世界网</div>
    <div class="wm-url">WWW.3DSJW.COM</div>
  </div>
  <aside class="rightbar">
    <svg class="i w22"><use href="#p1"/></svg>
    <svg class="i w22"><use href="#p2"/></svg>
    <svg class="i w22"><use href="#p3"/></svg>
    <svg class="i w22"><use href="#p4"/></svg>
    <svg class="i w22 ind"><use href="#pc"/></svg>
    <svg class="i w22 ind"><use href="#p6"/></svg>
    <svg class="i w22"><use href="#p7"/></svg>
    <svg class="i w22"><use href="#p8"/></svg>
    <span class="more"></span>
  </aside>
  <section class="panel">
    <div class="p-head">
      <svg class="i w16 p-gear"><use href="#gear"/></svg>
      <span class="p-title">测量体</span>
      <svg class="i w14 p-reset"><use href="#rst"/></svg>
    </div>
    <div class="p-sec p-sec-a">
      <div class="p-h">对象</div>
      <div class="p-row">
        <div class="p-pick"><svg class="i w14"><use href="#chk"/></svg><span>选择体 (1)</span></div>
        <div class="p-btn"><svg class="i w22"><use href="#ocube"/></svg></div>
      </div>
    </div>
    <div class="p-sec p-sec-b">
      <div class="p-h">关联测量和检查</div>
      <label class="p-check"><span class="box"></span><span>关联</span></label>
      <div class="p-need"><span class="p-need-l">需求</span><div class="sel sel-dis"><span>无</span><span class="a a-dis"></span></div></div>
    </div>
    <div class="p-more"><span class="a a-big"></span></div>
    <div class="p-actions">
      <span class="btn btn-ok">确定</span>
      <span class="btn">应用</span>
      <span class="btn">取消</span>
    </div>
  </section>
</main>

<footer class="tb-bottom">
  <span class="grip"></span>
  <svg class="i w16 m5"><use href="#vw1"/></svg>
  <svg class="i w16 m30"><use href="#rnd"/></svg>
  <svg class="i w22 m13"><use href="#bx2"/></svg>
  <svg class="i w20 m11"><use href="#l1"/></svg>
  <svg class="i w14 m29"><use href="#l1"/></svg>
  <svg class="i w18 m11"><use href="#l2"/></svg>
  <svg class="i w18 m10"><use href="#mv2"/></svg>
  <span class="sep m12"></span>
  <svg class="i w14 m16"><use href="#sk"/></svg>
  <svg class="i w10 m9"><use href="#l1"/></svg>
  <svg class="i w8 m32"><use href="#bx2"/></svg>
  <span class="sep m9"></span>
  <svg class="i w22 m8"><use href="#vw1"/></svg>
  <span class="sep m6"></span>
  <svg class="i w10 m12"><use href="#arch"/></svg>
  <svg class="i w22 m17"><use href="#bx2"/></svg>
  <svg class="i w14 m18"><use href="#bx2"/></svg>
  <span class="sep m6"></span>
  <svg class="i w14 m11"><use href="#p4"/></svg>
  <span class="sep m30"></span>
  <span class="grip m3"></span>
  <svg class="i w24 m5"><use href="#clip"/></svg>
  <svg class="i w24 m6"><use href="#bx2"/></svg>
  <span class="smudge m4"></span>
  <span class="sep sep-dark m8"></span>
  <svg class="i w10 m9"><use href="#k1"/></svg>
  <svg class="i w10 m23"><use href="#k2"/></svg>
  <svg class="i w18 m8"><use href="#k3"/></svg>
  <svg class="i w20 m15"><use href="#k1"/></svg>
  <svg class="i w20 m10"><use href="#bx2"/></svg>
  <svg class="i w22 m9"><use href="#bx2"/></svg>
  <svg class="i w22 m9"><use href="#bx3"/></svg>
  <svg class="i w18 m14"><use href="#g8"/></svg>
  <span class="sep sep-dark m20"></span>
  <svg class="i w14 m21"><use href="#bx2"/></svg>
  <span class="sep m25"></span>
  <svg class="i w18 m9"><use href="#g2"/></svg>
  <svg class="i w20 m13"><use href="#g4"/></svg>
  <svg class="i w10 m18"><use href="#g8"/></svg>
  <span class="sep m10"></span>
  <svg class="i w12 m15"><use href="#g2"/></svg>
  <span class="sep m21"></span>
  <svg class="i w24 m37"><use href="#g10"/></svg>
  <svg class="i w14 m19"><use href="#g2"/></svg>
  <span class="sep sep-dark m16"></span>
  <svg class="i w22 m7"><use href="#bx2"/></svg>
  <svg class="i w22 m8"><use href="#g4"/></svg>
  <svg class="i w12 m9"><use href="#g7"/></svg>
  <span class="sep m29"></span>
</footer>
</body>
</html>
```

FILE: styles.css
```css
* { box-sizing: border-box; }
html, body { margin: 0; height: 100%; }
body {
  width: 1577px;
  height: 817px;
  overflow: hidden;
  background: #fff;
  color: #222;
  font: 12px "Noto Sans", "Noto Sans CJK SC", sans-serif;
  display: flex;
  flex-direction: column;
}
.defs { position: absolute; width: 0; height: 0; }
.i { display: block; flex: none; }
.w8 { width: 8px; height: 8px; } .w10 { width: 10px; height: 10px; } .w11 { width: 11px; height: 11px; }
.w12 { width: 12px; height: 12px; } .w13 { width: 13px; height: 13px; } .w14 { width: 14px; height: 14px; }
.w16 { width: 16px; height: 16px; } .w18 { width: 18px; height: 18px; } .w19 { width: 19px; height: 19px; }
.w20 { width: 20px; height: 20px; } .w22 { width: 22px; height: 22px; } .w24 { width: 24px; height: 24px; }
.m3 { margin-left: 3px; } .m4 { margin-left: 4px; } .m5 { margin-left: 5px; } .m6 { margin-left: 6px; }
.m7 { margin-left: 7px; } .m8 { margin-left: 8px; } .m9 { margin-left: 9px; } .m10 { margin-left: 10px; }
.m11 { margin-left: 11px; } .m12 { margin-left: 12px; } .m13 { margin-left: 13px; } .m14 { margin-left: 14px; }
.m15 { margin-left: 15px; } .m16 { margin-left: 16px; } .m17 { margin-left: 17px; } .m18 { margin-left: 18px; }
.m19 { margin-left: 19px; } .m20 { margin-left: 20px; } .m21 { margin-left: 21px; } .m23 { margin-left: 23px; }
.m25 { margin-left: 25px; } .m29 { margin-left: 29px; } .m30 { margin-left: 30px; } .m32 { margin-left: 32px; }
.m37 { margin-left: 37px; } .m56 { margin-left: 56px; }
.t17 { margin-top: 17px; } .t18 { margin-top: 18px; } .t19 { margin-top: 19px; }
.t27 { margin-top: 27px; } .t30 { margin-top: 30px; } .t32 { margin-top: 32px; }

/* title bar */
.titlebar { position: relative; flex: none; height: 26px; display: flex; align-items: center; padding-left: 4px; }
.nx { font: bold 21px/22px "Liberation Sans", sans-serif; color: #8b9dab; letter-spacing: 1px; width: 32px; }
.title-sep { width: 1px; height: 19px; margin-left: 4px; background: #d0d0d0; }
.title-text { margin-left: 5px; white-space: pre; font-size: 12px; letter-spacing: .22px; color: #222; }
.siemens { margin-left: auto; font: bold 12.5px "Liberation Sans", sans-serif; letter-spacing: .65px; color: #059a9a; }
.win-min { display: block; width: 8px; height: 2px; background: #333; margin: 9px 0 0 28px; }
.win-restore {
  position: relative; display: block; width: 12px; height: 11px; margin: 0 7px 0 13px;
  border: 1px solid #333; border-top-width: 2px;
}
.badge {
  position: absolute; left: 1287px; top: -33px; width: 48px; height: 50px; border-radius: 50%;
  background: #f58b1c; color: #fff; font: bold 11px "Liberation Sans", sans-serif;
  display: flex; align-items: flex-end; justify-content: center; padding-bottom: 3px;
  box-shadow: 0 0 0 2px #d8d8d8, 0 4px 6px 1px rgba(0, 0, 0, .22);
  z-index: 3;
}

/* menu bar */
.menubar { flex: none; height: 27px; background: #c6d6d5; display: flex; align-items: center; padding-left: 3px; font-size: 11px; color: #2b2b2b; }
.grip { flex: none; display: block; width: 3px; height: 24px; background: repeating-linear-gradient(#b0b0b0 0 2px, transparent 2px 4px); }
.grip-menu { height: 20px; }
.menu-logo { margin: 0 5px 0 2px; }
.mi { flex: none; white-space: nowrap; }
.mw46 { width: 46px; } .mw49 { width: 49px; } .mw50 { width: 50px; } .mw51 { width: 51px; }
.mw55 { width: 55px; } .mw61 { width: 61px; } .mw62 { width: 62px; }
.upload { margin-left: auto; display: flex; width: 104px; height: 25px; border: 1px solid #3a8cc8; border-radius: 3px; overflow: hidden; }
.upload-ico { width: 29px; background: #1f97e0; display: flex; align-items: center; justify-content: center; }
.upload-txt { flex: 1; background: linear-gradient(#c8e7f8, #a4d8f4); color: #5d7f9f; font-size: 12px; display: flex; align-items: center; justify-content: center; }
.doc-min { margin: 9px 0 0 54px; }
.doc-restore { margin: 0 2px 0 8px; }

/* toolbars */
.tb { flex: none; height: 34px; width: fit-content; display: flex; align-items: center; padding-left: 3px; border-bottom: 1px solid #e2e2e2; }
.tb-sel { height: 32px; width: 100%; padding-left: 5px; border-bottom: 1px solid #8e9292; }
.lbl { width: 22px; font-size: 11px; white-space: nowrap; }
.a { flex: none; display: block; width: 7px; height: 4px; background: #222; clip-path: polygon(0 0, 100% 0, 50% 100%); }
.a-low { margin-top: 8px; }
.a-dis { background: #aaa; }
.a-big { width: 10px; height: 6px; }
.sep { flex: none; display: block; width: 1px; height: 25px; background: #d4d4d4; }
.sep-full { height: 33px; background: #e6e6e6; }
.search { flex: none; width: 125px; height: 20px; border: 1px solid #a8a8a8; display: flex; align-items: center; justify-content: space-between; padding: 0 4px 0 2px; font-size: 12px; }
.sel { flex: none; height: 20px; border: 1px solid #a8a8a8; background: #fff; display: flex; align-items: center; justify-content: space-between; padding: 0 5px 0 3px; font-size: 11px; }
.sel-a { width: 132px; } .sel-b { width: 140px; } .sel-c { width: 139px; }

/* workspace */
.workspace { position: relative; flex: 1; min-height: 0; display: flex; }
.leftbar { flex: none; width: 38px; border-right: 5px solid #fff; background: #d9d9d9; display: flex; flex-direction: column; align-items: center; padding: 5px 5px 0 0; box-shadow: inset -1px 0 0 #a0a0a0; }
.gear-ico { color: #333; }
.viewport { position: relative; flex: 1; min-width: 0; overflow: hidden; background: linear-gradient(#b5b6b8, #e6e7e9 85%); }
.model { position: absolute; inset: 0; width: 100%; height: 100%; }
.tri { font: 13px "Noto Sans", sans-serif; }
.tri-x { fill: #c04040; } .tri-z { fill: #2050e0; }
.wcs-z { font: 11px "Noto Sans", sans-serif; fill: #4060e8; }
.wcs-y { font: 10px "Noto Sans", sans-serif; fill: #50a050; }
.wcs-x { font: 11px "Noto Sans", sans-serif; fill: #d83030; }
.tip { position: absolute; left: 775px; top: 290px; width: 223px; height: 30px; background: #eff5f8; border: 1px solid #c8ccd0; display: flex; align-items: center; padding-left: 3px; }
.grip-tip { width: 6px; height: 22px; background: repeating-linear-gradient(#b5b5b5 0 2px, transparent 2px 3px); }
.sel-tip { width: 75px; height: 22px; margin-left: 8px; font-size: 12px; padding: 0 7px 0 5px; }
.tip-val { margin-left: 3px; font-size: 12.5px; white-space: nowrap; color: #222; }
.wm { position: absolute; right: 3px; bottom: 27px; font: bold 41px/46px "Liberation Sans", "Noto Sans CJK SC", sans-serif; color: rgba(255, 255, 255, .36); white-space: nowrap; }
.wm-url { position: absolute; left: 1338px; bottom: 12px; font: 12px/14px "Liberation Sans", sans-serif; letter-spacing: 5.3px; color: rgba(255, 255, 255, .5); white-space: nowrap; }
.rightbar { flex: none; width: 23px; background: #fff; overflow: hidden; display: flex; flex-direction: column; gap: 9px; padding: 261px 0 0 6px; }
.ind { margin-left: 6px; }
.more { display: block; width: 4px; height: 7px; margin: -1px 0 0 2px; background: #222; clip-path: polygon(100% 0, 100% 100%, 0 50%); }

/* panel */
.panel { position: absolute; right: 0; top: 0; width: 305px; height: 250px; background: #e6e6e6; border-left: 1px solid #bbb; border-bottom: 1px solid #bbb; overflow: hidden; display: flex; flex-direction: column; }
.p-head { flex: none; height: 24px; background: #5d8680; color: #fff; display: flex; align-items: center; padding-left: 6px; }
.p-gear { color: #fff; }
.p-title { margin-left: 9px; font-size: 13px; color: #e6f0ee; }
.p-reset { margin-left: auto; margin-right: 6px; }
.p-sec { flex: none; margin: 4px 0 0 5px; background: #fff; border-bottom: 1px solid #c8c8c8; padding-left: 7px; }
.p-sec-a { height: 70px; padding-top: 3px; }
.p-sec-b { height: 87px; padding-top: 3px; }
.p-h { font-size: 14px; line-height: 20px; color: #3a8fc4; }
.p-row { display: flex; margin: 7px 0 0 2px; height: 32px; gap: 2px; }
.p-pick { flex: none; width: 264px; background: #fdd56d; display: flex; align-items: center; padding-left: 2px; gap: 6px; }
.p-btn { flex: none; width: 40px; background: #fdd56d; padding: 2px 0 0 3px; }
.p-btn .i { outline: 1px dotted #1a2a90; outline-offset: 1px; margin-left: 3px; margin-top: 3px; }
.p-check { display: flex; align-items: center; gap: 5px; margin: 10px 0 0 2px; height: 14px; }
.box { display: block; flex: none; width: 13px; height: 13px; border: 1px solid #888; background: linear-gradient(135deg, #ccc, #f4f4f4); box-shadow: inset 0 0 0 1px #fff; }
.p-need { display: flex; align-items: center; margin: 5px 0 0 2px; color: #aaa; }
.p-need-l { flex: none; width: 157px; }
.sel-dis { width: 140px; height: 25px; color: #999; font-size: 12px; padding: 0 5px; }
.p-more { flex: none; height: 16px; display: flex; align-items: center; justify-content: flex-start; padding-left: 158px; margin-top: 0; border-bottom: 1px solid #d0d0d0; }
.p-actions { flex: none; display: flex; gap: 5px; margin: 8px 0 0 139px; }
.btn { flex: none; width: 54px; height: 25px; background: #c7c9cd; border: 1px solid #a8a8a8; display: flex; align-items: center; justify-content: center; }
.btn-ok { background: #9ccde8; border-color: #4a9ac8; }

/* bottom toolbar */
.tb-bottom { flex: none; height: 13px; overflow: hidden; display: flex; align-items: flex-start; padding: 6px 0 0 3px; background: #fff; }
.tb-bottom .sep { margin-top: -3px; height: 16px; }
.tb-bottom .sep-dark { background: #555; }
.smudge { flex: none; display: block; width: 45px; height: 7px; margin-top: 4px; background: repeating-linear-gradient(90deg, #c4c4c4 0 2px, transparent 2px 4px); }
```
